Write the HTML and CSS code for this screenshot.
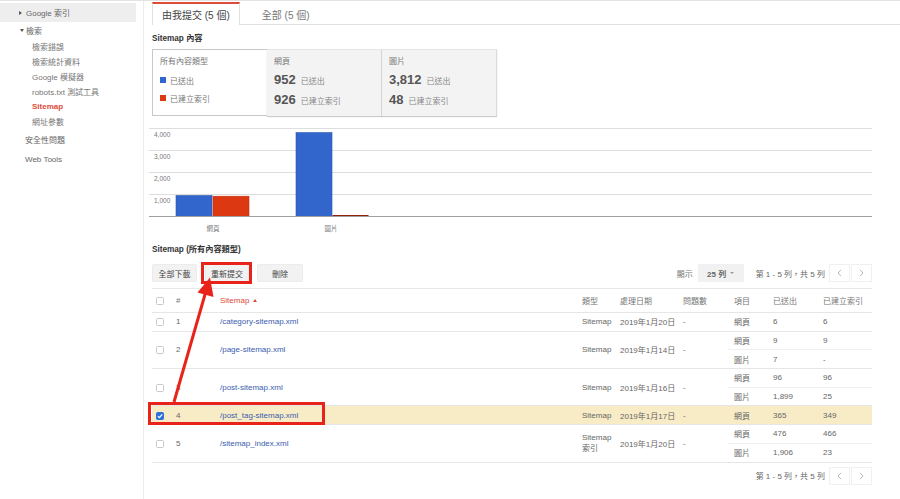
FILE: index.html
```html
<!DOCTYPE html>
<html lang="zh-Hant">
<head>
<meta charset="utf-8">
<title>Sitemap</title>
<link rel="stylesheet" href="styles.css">
</head>
<body>
<div class="app">
  <nav class="sidebar">
    <div class="nav-top is-selected"><span class="tri-right"></span>Google 索引</div>
    <div class="nav-top nav-open"><span class="tri-down"></span>檢索</div>
    <div class="nav-sub">檢索錯誤</div>
    <div class="nav-sub">檢索統計資料</div>
    <div class="nav-sub">Google 模擬器</div>
    <div class="nav-sub">robots.txt 測試工具</div>
    <div class="nav-sub nav-current">Sitemap</div>
    <div class="nav-sub">網址參數</div>
    <div class="nav-plain">安全性問題</div>
    <div class="nav-plain">Web Tools</div>
  </nav>

  <main class="main">
    <div class="tabs">
      <div class="tab tab-active">由我提交 (5 個)</div>
      <div class="tab">全部 (5 個)</div>
    </div>

    <h2 class="section-title">Sitemap 內容</h2>
    <div class="cards">
      <div class="card card-legend">
        <div class="card-label">所有內容類型</div>
        <div class="legend-row legend-first"><span class="swatch swatch-blue"></span>已送出</div>
        <div class="legend-row"><span class="swatch swatch-red"></span>已建立索引</div>
      </div>
      <div class="card card-stat">
        <div class="card-label">網頁</div>
        <div class="stat-row stat-first"><span class="stat-num">952</span><span class="stat-txt">已送出</span></div>
        <div class="stat-row"><span class="stat-num">926</span><span class="stat-txt">已建立索引</span></div>
      </div>
      <div class="card card-stat">
        <div class="card-label">圖片</div>
        <div class="stat-row stat-first"><span class="stat-num">3,812</span><span class="stat-txt">已送出</span></div>
        <div class="stat-row"><span class="stat-num">48</span><span class="stat-txt">已建立索引</span></div>
      </div>
    </div>

    <svg class="chart" width="720" height="112" viewBox="0 0 720 112">
      <g class="grid">
        <line x1="-3" y1="6.5" x2="720" y2="6.5"/>
        <line x1="-3" y1="28.5" x2="720" y2="28.5"/>
        <line x1="-3" y1="50.5" x2="720" y2="50.5"/>
        <line x1="-3" y1="72.5" x2="720" y2="72.5"/>
      </g>
      <g class="axis-label">
        <text x="2" y="14.5">4,000</text>
        <text x="2" y="36.5">3,000</text>
        <text x="2" y="58.5">2,000</text>
        <text x="2" y="80.5">1,000</text>
      </g>
      <rect class="bar-blue" x="24" y="73.5" width="36" height="21"/>
      <rect class="bar-red" x="61" y="74.2" width="36" height="20.3"/>
      <rect class="bar-blue" x="144" y="10.6" width="36" height="83.9"/>
      <rect class="bar-red-thin" x="180.5" y="93" width="36" height="1.5"/>
      <line class="baseline" x1="-3" y1="94.5" x2="720" y2="94.5"/>
      <g class="cat-label">
        <text x="61" y="109">網頁</text>
        <text x="179" y="109">圖片</text>
      </g>
    </svg>

    <h2 class="section-title title-table">Sitemap (所有內容類型)</h2>
    <div class="toolbar">
      <div class="btn-group">
        <button class="btn">全部下載</button>
        <button class="btn btn-narrow">重新提交</button>
        <button class="btn btn-wide">刪除</button>
      </div>
      <div class="pager">
        <span class="pager-show">顯示</span>
        <span class="select">25 列<span class="caret"></span></span>
        <span class="pager-text">第 1 - 5 列，共 5 列</span>
        <span class="nav-btn"><svg width="5" height="8" viewBox="0 0 5 8"><path d="M4 0.8 L1 4 L4 7.2" fill="none" stroke="#b5b5b5" stroke-width="1"/></svg></span>
        <span class="nav-btn"><svg width="5" height="8" viewBox="0 0 5 8"><path d="M1 0.8 L4 4 L1 7.2" fill="none" stroke="#b5b5b5" stroke-width="1"/></svg></span>
      </div>
    </div>

    <table class="sitemaps">
      <colgroup>
        <col class="c-chk"><col class="c-num"><col class="c-path"><col class="c-type"><col class="c-date"><col class="c-issue"><col class="c-item"><col class="c-sent"><col class="c-idx">
      </colgroup>
      <thead>
        <tr>
          <th class="cell-chk"><span class="cb"></span></th>
          <th>#</th>
          <th class="th-sort">Sitemap<span class="sort-up"></span></th>
          <th>類型</th>
          <th>處理日期</th>
          <th>問題數</th>
          <th>項目</th>
          <th>已送出</th>
          <th>已建立索引</th>
        </tr>
      </thead>
      <tbody>
        <tr class="grp">
          <td class="cell-chk"><span class="cb"></span></td>
          <td>1</td>
          <td><a class="link">/category-sitemap.xml</a></td>
          <td>Sitemap</td>
          <td>2019年1月20日</td>
          <td>-</td>
          <td>網頁</td><td>6</td><td>6</td>
        </tr>
        <tr class="grp">
          <td class="cell-chk" rowspan="2"><span class="cb"></span></td>
          <td rowspan="2">2</td>
          <td rowspan="2"><a class="link">/page-sitemap.xml</a></td>
          <td rowspan="2">Sitemap</td>
          <td rowspan="2">2019年1月14日</td>
          <td rowspan="2">-</td>
          <td>網頁</td><td>9</td><td>9</td>
        </tr>
        <tr class="sub"><td>圖片</td><td>7</td><td>-</td></tr>
        <tr class="grp">
          <td class="cell-chk" rowspan="2"><span class="cb"></span></td>
          <td rowspan="2">3</td>
          <td rowspan="2"><a class="link">/post-sitemap.xml</a></td>
          <td rowspan="2">Sitemap</td>
          <td rowspan="2">2019年1月16日</td>
          <td rowspan="2">-</td>
          <td>網頁</td><td>96</td><td>96</td>
        </tr>
        <tr class="sub"><td>圖片</td><td>1,899</td><td>25</td></tr>
        <tr class="grp selected">
          <td class="cell-chk"><span class="cb cb-checked"><svg width="6" height="6" viewBox="0 0 8 8"><path d="M1.2 4.2 L3.2 6.1 L6.9 1.8" fill="none" stroke="#fff" stroke-width="1.6"/></svg></span></td>
          <td>4</td>
          <td><a class="link">/post_tag-sitemap.xml</a></td>
          <td>Sitemap</td>
          <td>2019年1月17日</td>
          <td>-</td>
          <td>網頁</td><td>365</td><td>349</td>
        </tr>
        <tr class="grp">
          <td class="cell-chk" rowspan="2"><span class="cb"></span></td>
          <td rowspan="2">5</td>
          <td rowspan="2"><a class="link">/sitemap_index.xml</a></td>
          <td rowspan="2" class="two-line">Sitemap<br>索引</td>
          <td rowspan="2">2019年1月20日</td>
          <td rowspan="2">-</td>
          <td>網頁</td><td>476</td><td>466</td>
        </tr>
        <tr class="sub"><td>圖片</td><td>1,906</td><td>23</td></tr>
      </tbody>
    </table>

    <div class="pager pager-bottom">
      <span class="pager-text">第 1 - 5 列，共 5 列</span>
      <span class="nav-btn"><svg width="5" height="8" viewBox="0 0 5 8"><path d="M4 0.8 L1 4 L4 7.2" fill="none" stroke="#b5b5b5" stroke-width="1"/></svg></span>
      <span class="nav-btn"><svg width="5" height="8" viewBox="0 0 5 8"><path d="M1 0.8 L4 4 L1 7.2" fill="none" stroke="#b5b5b5" stroke-width="1"/></svg></span>
    </div>
  </main>
</div>

<svg class="annot" width="900" height="499" viewBox="0 0 900 499">
  <rect x="202.5" y="263.5" width="48" height="19" fill="none" stroke="#e8231a" stroke-width="3"/>
  <rect x="149.5" y="403.5" width="174" height="20" fill="none" stroke="#e8231a" stroke-width="3"/>
  <line x1="174" y1="402" x2="206" y2="291" stroke="#e8231a" stroke-width="3"/>
  <polygon points="210,277.5 213.5,297 197.5,292.5" fill="#e8231a"/>
</svg>
</body>
</html>
```

FILE: styles.css
```css
* { box-sizing: border-box; }

html, body { margin: 0; padding: 0; }

body {
  width: 900px;
  height: 499px;
  overflow: hidden;
  background: #fff;
  border-top: 1px solid #e3e3e3;
  font-family: "Liberation Sans", "Noto Sans CJK TC", sans-serif;
  font-size: 8px;
  color: #666;
}

.app {
  display: flex;
  min-height: 498px;
}

/* ---------- sidebar ---------- */
.sidebar {
  width: 144px;
  flex: none;
  border-right: 1px solid #ececec;
  padding-top: 2px;
  white-space: nowrap;
}

.nav-top,
.nav-sub,
.nav-plain {
  display: flex;
  align-items: center;
  margin-right: 7px;
}

.nav-top {
  height: 19px;
  padding-left: 19px;
  color: #666;
}

.nav-top.is-selected { background: #eeeeee; }

.nav-open { height: 17px; }

.nav-sub {
  height: 15px;
  padding-left: 32px;
  color: #777;
}

.nav-current {
  color: #dd4b39;
  font-weight: bold;
}

.nav-plain {
  height: 20px;
  padding-left: 25px;
  color: #666;
}

.tri-right {
  width: 0;
  height: 0;
  border-left: 3px solid #555;
  border-top: 2.5px solid transparent;
  border-bottom: 2.5px solid transparent;
  margin-right: 4px;
}

.tri-down {
  width: 0;
  height: 0;
  border-top: 3px solid #555;
  border-left: 2px solid transparent;
  border-right: 2px solid transparent;
  margin-left: 1px;
  margin-right: 2px;
}

/* ---------- main ---------- */
.main {
  flex: 1;
  min-width: 0;
  padding: 0 28px 0 8px;
}

.tabs {
  display: flex;
  gap: 12px;
  margin: 1px -28px 0 0;
  height: 23px;
  border-bottom: 1px solid #e0e0e0;
}

.tab {
  height: 23px;
  display: flex;
  align-items: center;
  padding: 0 9px;
  border: 1px solid transparent;
  border-top-width: 2px;
  border-bottom: none;
  font-size: 10px;
  color: #777;
  white-space: nowrap;
}

.tab-active {
  background: #fff;
  border-color: #e0e0e0;
  border-top-color: #dd4b39;
  color: #444;
}

.section-title {
  margin: 9px 0 0;
  font-size: 8.2px;
  line-height: 10px;
  font-weight: bold;
  color: #333;
}

.title-table { margin-top: 11px; }

/* ---------- cards ---------- */
.cards {
  display: flex;
  margin-top: 5px;
  height: 67px;
}

.card {
  width: 115px;
  padding: 6px 7px 0;
  border-top: 1px solid #e6e6e6;
}

.card-legend {
  background: #fff;
  border: 1px solid #c8c8c8;
  border-right: none;
}

.card-stat {
  background: #f3f3f3;
  border-right: 1px solid #dadada;
  box-shadow: 0 1px 1px rgba(0, 0, 0, 0.2);
}

.card-label {
  height: 12px;
  line-height: 12px;
  color: #777;
}

.legend-row {
  height: 18px;
  display: flex;
  align-items: center;
  color: #777;
}

.legend-first { margin-top: 3px; }

.swatch {
  width: 6px;
  height: 6px;
  margin-right: 4px;
}

.swatch-blue { background: #3366cc; }
.swatch-red { background: #dc3912; }

.stat-row {
  height: 20px;
  line-height: 20px;
  display: flex;
  align-items: baseline;
  white-space: nowrap;
}

.stat-first { margin-top: 2px; }

.stat-num {
  font-size: 13px;
  font-weight: bold;
  color: #555;
}

.stat-txt {
  margin-left: 5px;
  color: #888;
}

/* ---------- chart ---------- */
.chart {
  display: block;
  margin-top: 6px;
  overflow: visible;
}

.grid line {
  stroke: #dedede;
  stroke-width: 1.2;
}

.baseline {
  stroke: #a0a0a0;
  stroke-width: 1.2;
}

.axis-label text,
.cat-label text {
  font-family: "Liberation Sans", "Noto Sans CJK TC", sans-serif;
  font-size: 6.5px;
  fill: #777;
}

.cat-label text { text-anchor: middle; }

.bar-blue {
  fill: #3366cc;
  stroke: #2b56ad;
  stroke-width: 0.6;
}

.bar-red {
  fill: #dc3912;
  stroke: #bf300f;
  stroke-width: 0.6;
}

.bar-red-thin { fill: #8f220b; }

/* ---------- toolbar ---------- */
.toolbar {
  display: flex;
  justify-content: space-between;
  align-items: center;
  margin-top: 9px;
  height: 18px;
}

.btn-group {
  display: flex;
  gap: 8px;
}

.btn {
  height: 18px;
  width: 45px;
  padding: 0;
  background: #f2f2f2;
  border: 1px solid #ececec;
  border-radius: 2px;
  font: inherit;
  color: #444;
}

.btn-narrow { width: 44px; }
.btn-wide { width: 46px; }

.pager {
  display: flex;
  align-items: center;
  height: 18px;
  white-space: nowrap;
}

.pager-show {
  margin-right: 5px;
  color: #777;
}

.select {
  width: 46px;
  height: 18px;
  display: flex;
  align-items: center;
  justify-content: center;
  background: #f1f1f1;
  color: #666;
  font-weight: bold;
}

.caret {
  width: 0;
  height: 0;
  margin-left: 4px;
  border-top: 2.5px solid #999;
  border-left: 2px solid transparent;
  border-right: 2px solid transparent;
}

.pager-text {
  margin: 0 3px 0 12px;
  color: #666;
}

.nav-btn {
  width: 21px;
  height: 18px;
  margin-left: 1px;
  display: flex;
  align-items: center;
  justify-content: center;
  border: 1px solid #f0f0f0;
}

.pager-bottom {
  justify-content: flex-end;
  margin-top: 4px;
}

/* ---------- table ---------- */
.sitemaps {
  width: 720px;
  margin-top: 6px;
  border-collapse: collapse;
  table-layout: fixed;
  border-bottom: 1px solid #e6e6e6;
}

.c-chk { width: 18px; }
.c-num { width: 44px; }
.c-path { width: 362px; }
.c-type { width: 38px; }
.c-date { width: 63px; }
.c-issue { width: 51px; }
.c-item { width: 39px; }
.c-sent { width: 50px; }
.c-idx { width: 55px; }

.sitemaps th,
.sitemaps td {
  padding: 0 0 0 6px;
  text-align: left;
  vertical-align: middle;
  white-space: nowrap;
  font-size: 8px;
}

.sitemaps th {
  height: 24px;
  border-top: 1px solid #e8e8e8;
  font-weight: normal;
  color: #777;
}

.sitemaps td {
  height: 18.7px;
  color: #666;
}

.sitemaps .cell-chk { padding-left: 4px; }

.grp td { border-top: 1px solid #e6e6e6; }
.sub td { border-top: 1px solid #f0f0f0; }

.selected td { background: #f8ecc7; }

.th-sort { color: #dd4b39 !important; }

.sort-up {
  display: inline-block;
  width: 0;
  height: 0;
  margin-left: 4px;
  vertical-align: middle;
  border-left: 2.5px solid transparent;
  border-right: 2.5px solid transparent;
  border-bottom: 3px solid #dd4b39;
}

.link {
  color: #3a5dae;
  text-decoration: none;
}

.two-line {
  line-height: 11px;
}

.cb {
  display: inline-flex;
  align-items: center;
  justify-content: center;
  width: 8px;
  height: 8px;
  vertical-align: middle;
  background: #fff;
  border: 1px solid #c9c9c9;
  border-radius: 1.5px;
}

.cb-checked {
  background: #2f6fdb;
  border-color: #2f6fdb;
}

/* ---------- annotation overlay ---------- */
.annot {
  position: absolute;
  top: 0;
  left: 0;
  pointer-events: none;
}
```
